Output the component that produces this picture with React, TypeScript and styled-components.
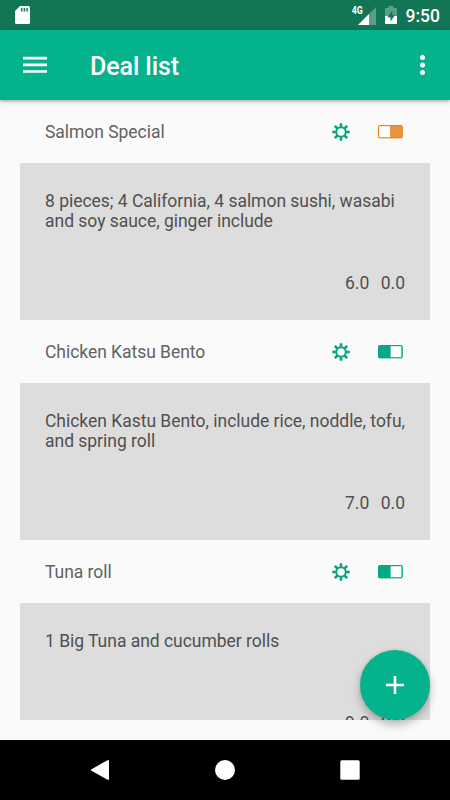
import React from 'react';
import styled, { createGlobalStyle } from 'styled-components';

const GlobalStyle = createGlobalStyle`
  *, *::before, *::after { box-sizing: border-box; }
  html, body { margin: 0; padding: 0; }
  body { font-family: Roboto, "Liberation Sans", sans-serif; background: #fafafa; }
  button { border: 0; padding: 0; background: none; font: inherit; color: inherit; }
  svg { display: block; }
`;

const Screen = styled.div`
  position: relative;
  display: flex;
  flex-direction: column;
  width: 450px;
  height: 800px;
  overflow: hidden;
  background: #fafafa;
`;

const StatusBar = styled.div`
  display: flex;
  flex: none;
  justify-content: space-between;
  height: 30px;
  padding: 0 10px 0 15px;
  background: #127556;
  color: #fff;
`;

const StatusGroup = styled.div`
  display: flex;
  align-items: center;
`;

const Clock = styled.span`
  margin-left: 9px;
  padding-top: 2px;
  font-size: 17.5px;
  font-weight: 500;
  line-height: 28px;
`;

const NetworkLabel = styled.span`
  align-self: flex-start;
  margin: 5px -6px 0 0;
  font-size: 10px;
  font-weight: 700;
  line-height: 11px;
  transform: scaleX(0.88);
`;

const SignalIcon = styled.svg`
  margin: 1px 9px 0 0;
`;

const Toolbar = styled.header`
  position: relative;
  z-index: 1;
  display: flex;
  flex: none;
  align-items: center;
  height: 70px;
  padding: 0 20px;
  background: #04b28c;
  color: #fff;
  box-shadow: 0 1px 3px rgba(0, 0, 0, 0.3), 0 3px 6px rgba(0, 0, 0, 0.08);
`;

const Title = styled.h1`
  flex: 1;
  margin: 4px 0 0 40px;
  font-size: 25px;
  font-weight: 500;
  letter-spacing: -0.08px;
  line-height: 30px;
`;

const IconButton = styled.button`
  display: flex;
  align-items: center;
  justify-content: center;
`;

const MenuButton = styled(IconButton)`
  width: 30px;
  height: 30px;
`;

const OverflowButton = styled(IconButton)`
  width: 15px;
  height: 30px;
`;

const DealList = styled.main`
  flex: none;
  height: 620px;
  padding: 0 20px;
  overflow: hidden;
`;

const Deal = styled.section`
  height: 220px;
`;

const DealHeader = styled.div`
  display: flex;
  align-items: center;
  height: 63px;
  padding: 0 27px 0 25px;
`;

const DealName = styled.h2`
  flex: 1;
  margin: 0;
  padding-top: 2px;
  font-size: 17.5px;
  font-weight: 400;
  letter-spacing: -0.04px;
  line-height: 21px;
  color: #626262;
`;

const ToggleButton = styled(IconButton)`
  margin-left: 28px;
`;

const DealBody = styled.div`
  display: flex;
  flex-direction: column;
  justify-content: space-between;
  height: 157px;
  padding: 28px 25px 27px;
  background: #ddd;
  color: #505050;
  font-size: 17.5px;
  letter-spacing: -0.025px;
  line-height: 20px;
`;

const Description = styled.p`
  margin: 0;
  white-space: pre;
`;

const Prices = styled.div`
  display: flex;
  justify-content: flex-end;
  gap: 11.5px;
`;

const AddButton = styled(IconButton)`
  position: absolute;
  z-index: 2;
  left: 360px;
  top: 650px;
  width: 70px;
  height: 70px;
  border-radius: 50%;
  background: #04b28c;
  box-shadow: 0 5px 10px rgba(0, 0, 0, 0.27), 0 0 3px rgba(0, 0, 0, 0.12);
`;

const NavigationBar = styled.nav`
  display: grid;
  grid-template-columns: repeat(3, 125px);
  justify-content: center;
  align-items: center;
  height: 60px;
  margin-top: auto;
  background: #000;
`;

const Gear = () => (
  <svg width="18" height="18" viewBox="0 0 18 18" fill="none" stroke="#0aa580" strokeWidth="2">
    <circle cx="9" cy="9" r="4.8" />
    <path strokeWidth="2.6" d="M9 4V.2M9 14v3.8M4 9H.2M14 9h3.8M5.500 5.500 2.800 2.800M12.500 5.500l2.700-2.700M5.500 12.500l-2.700 2.700M12.500 12.500l2.700 2.700" />
  </svg>
);

const Toggle = ({ active }: { active: boolean }) => {
  const color = active ? '#04a983' : '#e8943f';
  const edge = active ? '#04a983' : '#e98617';
  return (
    <svg width="25" height="14" viewBox="0 0 25 14">
      <rect x=".5" y=".5" width="23.800" height="12.400" rx="1" fill={color} stroke={edge} />
      <rect x={active ? 12.6 : 1.2} y="1.2" width="10.800" height="11" fill="#fff" />
    </svg>
  );
};

interface DealData {
  name: string;
  active: boolean;
  description: string;
  price: string;
  discount: string;
}

const deals: DealData[] = [
  {
    name: 'Salmon Special',
    active: false,
    description: '8 pieces; 4 California, 4 salmon sushi, wasabi\nand soy sauce, ginger include',
    price: '6.0',
    discount: '0.0',
  },
  {
    name: 'Chicken Katsu Bento',
    active: true,
    description: 'Chicken Kastu Bento, include rice, noddle, tofu,\nand spring roll',
    price: '7.0',
    discount: '0.0',
  },
  {
    name: 'Tuna roll',
    active: true,
    description: '1 Big Tuna and cucumber rolls',
    price: '9.0',
    discount: '0.0',
  },
];

export default function App() {
  return (
    <>
      <GlobalStyle />
      <Screen>
        <StatusBar>
          <StatusGroup>
            <svg width="15" height="18" viewBox="0 0 15 18">
              <path fill="#fff" d="M5 0h8.500A1.500 1.500 0 0 1 15 1.500v15a1.500 1.500 0 0 1-1.500 1.500h-12A1.500 1.500 0 0 1 0 16.500V5z" />
              <path stroke="#127556" strokeWidth="1.500" d="M6.700 2v3.500M9.400 2v3.500M12.100 2v3.500" />
            </svg>
          </StatusGroup>
          <StatusGroup>
            <NetworkLabel>4G</NetworkLabel>
            <SignalIcon width="18" height="18" viewBox="0 0 18 18">
              <path fill="#fff" fillOpacity=".3" d="M18 0v18H0z" />
              <path fill="#fff" d="M11 7v11H0z" />
            </SignalIcon>
            <svg width="12" height="18" viewBox="0 0 12 18">
              <path fill="#fff" fillOpacity=".3" d="M3.500 0h5v2H11a1 1 0 0 1 1 1v7H0V3a1 1 0 0 1 1-1h2.500z" />
              <path fill="#fff" d="M0 10h12v7a1 1 0 0 1-1 1H1a1 1 0 0 1-1-1z" />
              <path fill="#127556" d="M7.300 4.500 2.500 11.500h3v4l4.500-6.500H7.300z" />
            </svg>
            <Clock>9:50</Clock>
          </StatusGroup>
        </StatusBar>
        <Toolbar>
          <MenuButton aria-label="Menu">
            <svg width="24" height="18" viewBox="0 0 24 18">
              <path stroke="#fff" strokeWidth="2.700" d="M0 2.100h24M0 8.800h24M0 15.500h24" />
            </svg>
          </MenuButton>
          <Title>Deal list</Title>
          <OverflowButton aria-label="More options">
            <svg width="5" height="20" viewBox="0 0 5 20" fill="#fff">
              <circle cx="2.500" cy="2.500" r="2.500" />
              <circle cx="2.500" cy="10" r="2.500" />
              <circle cx="2.500" cy="17.500" r="2.500" />
            </svg>
          </OverflowButton>
        </Toolbar>
        <DealList>
          {deals.map((deal) => (
            <Deal key={deal.name}>
              <DealHeader>
                <DealName>{deal.name}</DealName>
                <IconButton aria-label="Settings">
                  <Gear />
                </IconButton>
                <ToggleButton aria-label="Toggle deal">
                  <Toggle active={deal.active} />
                </ToggleButton>
              </DealHeader>
              <DealBody>
                <Description>{deal.description}</Description>
                <Prices>
                  <span>{deal.price}</span>
                  <span>{deal.discount}</span>
                </Prices>
              </DealBody>
            </Deal>
          ))}
        </DealList>
        <AddButton aria-label="Add deal">
          <svg width="18" height="18" viewBox="0 0 18 18">
            <path stroke="#fff" strokeWidth="2.600" d="M9 0v18M0 9h18" />
          </svg>
        </AddButton>
        <NavigationBar>
          <IconButton aria-label="Back">
            <svg width="18" height="20" viewBox="0 0 18 20">
              <path fill="#fff" stroke="#fff" strokeWidth="2" strokeLinejoin="round" d="M17 1v18L1 10z" />
            </svg>
          </IconButton>
          <IconButton aria-label="Home">
            <svg width="20" height="20" viewBox="0 0 20 20">
              <circle cx="10" cy="10" r="10" fill="#fff" />
            </svg>
          </IconButton>
          <IconButton aria-label="Recent apps">
            <svg width="20" height="20" viewBox="0 0 20 20">
              <rect x=".3" y=".3" width="19.400" height="19.400" rx="1.500" fill="#fff" />
            </svg>
          </IconButton>
        </NavigationBar>
      </Screen>
    </>
  );
}
